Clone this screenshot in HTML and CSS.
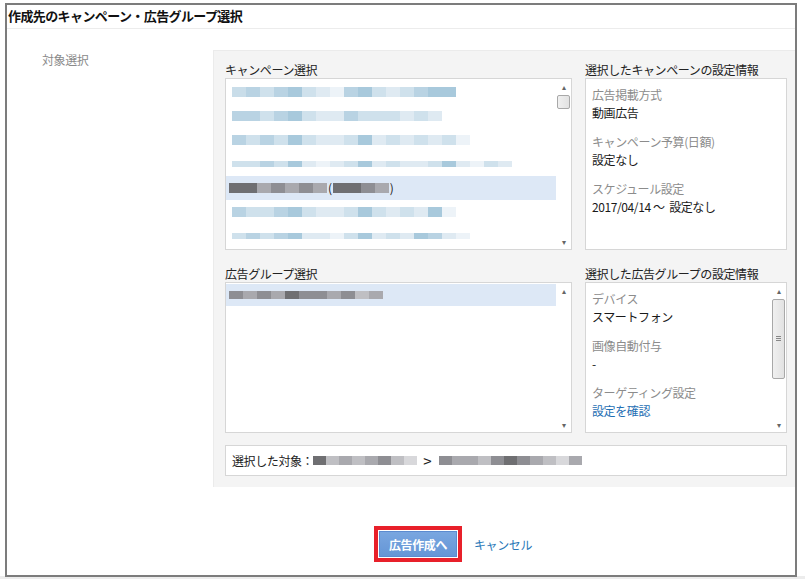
FILE: index.html
```html
<!DOCTYPE html>
<html lang="ja">
<head>
<meta charset="utf-8">
<link rel="stylesheet" href="styles.css">
</head>
<body>
<div class="frame">
  <div class="title">作成先のキャンペーン・広告グループ選択</div>
  <div class="content">
    <div class="side-label">対象選択</div>
    <div class="panel">
      <div class="grid">
        <div class="col">
          <div class="label">キャンペーン選択</div>
          <div class="listbox camp">
            <div class="rows">
              <div class="row"><i class="a"></i><i class="b"></i><i class="c"></i><i class="b"></i><i class="d"></i><i class="c"></i><i class="e"></i><i class="f"></i><i class="b"></i><i class="d"></i><i class="c"></i><i class="e"></i><i class="c"></i><i class="b"></i><i class="d"></i><i class="d"></i></div>
              <div class="row"><i class="b"></i><i class="b"></i><i class="c"></i><i class="b"></i><i class="d"></i><i class="c"></i><i class="e"></i><i class="e"></i><i class="b"></i><i class="c"></i><i class="c"></i><i class="c"></i><i class="e"></i><i class="c"></i><i class="e"></i></div>
              <div class="row"><i class="b"></i><i class="c"></i><i class="b"></i><i class="c"></i><i class="d"></i><i class="c"></i><i class="e"></i><i class="e"></i><i class="c"></i><i class="d"></i><i class="e"></i><i class="c"></i><i class="e"></i><i class="c"></i><i class="e"></i><i class="c"></i><i class="f"></i></div>
              <div class="row thin"><i class="c"></i><i class="c"></i><i class="b"></i><i class="c"></i><i class="d"></i><i class="e"></i><i class="f"></i><i class="e"></i><i class="c"></i><i class="d"></i><i class="e"></i><i class="c"></i><i class="e"></i><i class="e"></i><i class="c"></i><i class="d"></i><i class="e"></i><i class="f"></i><i class="c"></i><i class="e"></i></div>
              <div class="row sel"><i class="g1"></i><i class="g1"></i><i class="g3"></i><i class="g2"></i><i class="g3"></i><i class="g2"></i><i class="g3"></i><span class="paren">(</span><i class="g1"></i><i class="g1"></i><i class="g2"></i><i class="g3"></i><span class="paren">)</span></div>
              <div class="row"><i class="b"></i><i class="c"></i><i class="c"></i><i class="b"></i><i class="d"></i><i class="c"></i><i class="e"></i><i class="e"></i><i class="c"></i><i class="d"></i><i class="c"></i><i class="e"></i><i class="c"></i><i class="e"></i><i class="d"></i><i class="f"></i></div>
              <div class="row thin"><i class="c"></i><i class="b"></i><i class="c"></i><i class="b"></i><i class="d"></i><i class="e"></i><i class="e"></i><i class="f"></i><i class="c"></i><i class="d"></i><i class="e"></i><i class="c"></i><i class="e"></i><i class="d"></i><i class="b"></i><i class="e"></i><i class="f"></i></div>
            </div>
            <div class="sbar">
              <span class="arr">&#9652;</span>
              <span class="thumb small"></span>
              <span class="fill"></span>
              <span class="arr">&#9662;</span>
            </div>
          </div>
        </div>
        <div class="col">
          <div class="label">選択したキャンペーンの設定情報</div>
          <div class="infobox">
            <div class="info">
              <div class="item"><div class="k">広告掲載方式</div><div class="v">動画広告</div></div>
              <div class="item"><div class="k">キャンペーン予算(日額)</div><div class="v">設定なし</div></div>
              <div class="item"><div class="k">スケジュール設定</div><div class="v">2017/04/14 ～&nbsp; 設定なし</div></div>
            </div>
          </div>
        </div>
        <div class="col">
          <div class="label">広告グループ選択</div>
          <div class="listbox grp">
            <div class="rows">
              <div class="row sel"><i class="g2"></i><i class="g3"></i><i class="g2"></i><i class="g3"></i><i class="g1"></i><i class="g2"></i><i class="g2"></i><i class="g3"></i><i class="g2"></i><i class="g4"></i><i class="g3"></i></div>
            </div>
            <div class="sbar">
              <span class="arr">&#9652;</span>
              <span class="fill"></span>
              <span class="arr">&#9662;</span>
            </div>
          </div>
        </div>
        <div class="col">
          <div class="label">選択した広告グループの設定情報</div>
          <div class="infobox grp">
            <div class="info">
              <div class="item"><div class="k">デバイス</div><div class="v">スマートフォン</div></div>
              <div class="item"><div class="k">画像自動付与</div><div class="v">-</div></div>
              <div class="item"><div class="k">ターゲティング設定</div><div class="v link">設定を確認</div></div>
            </div>
            <div class="sbar">
              <span class="arr">&#9652;</span>
              <span class="thumb big"><span class="grip"></span></span>
              <span class="fill"></span>
              <span class="arr">&#9662;</span>
            </div>
          </div>
        </div>
      </div>
      <div class="target">
        <span class="tlabel">選択した対象：</span>
        <span class="blur"><i class="g1"></i><i class="g4"></i><i class="g3"></i><i class="g4"></i><i class="g3"></i><i class="g2"></i><i class="g4"></i><i class="g5"></i></span>
        <span class="gt">&gt;</span>
        <span class="blur"><i class="g2"></i><i class="g3"></i><i class="g3"></i><i class="g4"></i><i class="g2"></i><i class="g1"></i><i class="g2"></i><i class="g3"></i><i class="g4"></i><i class="g5"></i><i class="g3"></i></span>
      </div>
    </div>
  </div>
  <div class="actions">
    <span class="hl"><button class="btn">広告作成へ</button></span>
    <a class="cancel" href="#">キャンセル</a>
  </div>
</div>
</body>
</html>
```

FILE: styles.css
```css
html, body {
  margin: 0;
  padding: 0;
}
body {
  font-family: "Noto Sans CJK JP", "Noto Sans", "Liberation Sans", sans-serif;
  font-size: 12px;
  letter-spacing: -0.4px;
  color: #222;
  height: 579px;
  overflow: hidden;
  background: linear-gradient(#fff 0, #fff 576px, #ececec 576px);
}
.frame {
  box-sizing: border-box;
  margin: 3px 8px 0 5px;
  width: 792px;
  height: 574px;
  border: 2px solid #7c7c7c;
  background: #fff;
  display: flex;
  flex-direction: column;
}
.title {
  height: 23px;
  line-height: 22px;
  padding-left: 1px;
  font-size: 13px;
  font-weight: bold;
  color: #111;
  border-bottom: 1px solid #ececec;
  letter-spacing: -0.6px;
}
.content {
  display: flex;
  margin-top: 21px;
}
.side-label {
  width: 206px;
  box-sizing: border-box;
  padding-left: 35px;
  padding-top: 2px;
  color: #8a8a8a;
  font-size: 12px;
  line-height: 16px;
}
.panel {
  flex: 1;
  background: #f4f4f4;
  border-top: 1px solid #ebebeb;
  border-left: 1px solid #ebebeb;
  padding: 12px 8px 11px 11px;
}
.grid {
  display: grid;
  grid-template-columns: 347px 202px;
  column-gap: 13px;
  row-gap: 17px;
}
.label {
  height: 14px;
  line-height: 14px;
  font-size: 12px;
  color: #222;
  margin-bottom: 1px;
}
.listbox, .infobox {
  box-sizing: border-box;
  border: 1px solid #d6d6d6;
  background: #fff;
  display: flex;
}
.camp, .infobox {
  height: 172px;
}
.grp {
  height: 151px;
}
.rows {
  flex: 1;
  padding-top: 1px;
}
.row {
  height: 24px;
  display: flex;
  align-items: center;
  padding-left: 6px;
}
.row i {
  display: block;
  width: 14px;
  height: 10px;
}
.row.thin i {
  height: 6px;
}
.grp .rows {
  padding-top: 1px;
}
.grp .row {
  height: 22px;
  padding-left: 3px;
}
.grp .row i {
  height: 8px;
}
.row.sel {
  background: #dde8f6;
}
.camp .row.sel {
  padding-left: 3px;
}
.a { background: #c9dde9; }
.b { background: #b9d3e3; }
.c { background: #cfe1ec; }
.d { background: #a8c9dc; }
.e { background: #dfeaf2; }
.f { background: #edf3f8; }
.g1 { background: #6f6f72; }
.g2 { background: #8e8e93; }
.g3 { background: #a9a9ae; }
.g4 { background: #bfbfc3; }
.g5 { background: #d8d8db; }
.paren {
  font-size: 12px;
  color: #222;
  line-height: 10px;
  padding: 0 1px;
}
.sbar {
  width: 15px;
  display: flex;
  flex-direction: column;
  align-items: center;
  padding: 3px 0 2px;
}
.arr {
  font-size: 8px;
  line-height: 10px;
  color: #666;
  height: 10px;
}
.thumb {
  box-sizing: border-box;
  width: 13px;
  border: 1px solid #a8a8a8;
  border-radius: 2px;
  background: linear-gradient(90deg, #f0f0f0, #e2e2e2);
  margin-top: 3px;
}
.thumb.small {
  height: 14px;
}
.thumb.big {
  height: 80px;
  display: flex;
  align-items: center;
  justify-content: center;
}
.grip {
  width: 5px;
  height: 6px;
  background: repeating-linear-gradient(#888 0, #888 1px, transparent 1px, transparent 2px);
}
.fill {
  flex: 1;
}
.info {
  flex: 1;
  padding: 7px 0 0 6px;
}
.item {
  margin-bottom: 11px;
}
.k {
  line-height: 18px;
  color: #8c8c8c;
}
.v {
  line-height: 18px;
  color: #1a1a1a;
}
.link {
  color: #1f6fb4;
}
.target {
  box-sizing: border-box;
  margin-top: 12px;
  height: 31px;
  width: 562px;
  border: 1px solid #d6d6d6;
  background: #fff;
  display: flex;
  align-items: center;
  padding-left: 6px;
}
.tlabel {
  color: #222;
}
.blur {
  display: flex;
}
.blur i {
  display: block;
  width: 13px;
  height: 9px;
}
.gt {
  font-size: 15px;
  margin: 0 8px 0 6px;
  color: #222;
  line-height: 12px;
}
.actions {
  display: flex;
  align-items: center;
  margin-top: 39px;
  padding-left: 367px;
}
.hl {
  display: inline-block;
  border: 4px solid #e8202a;
  padding: 1px;
  background: #fff;
}
.btn {
  display: block;
  width: 78px;
  height: 26px;
  border: 1px solid #5b8bd0;
  background: linear-gradient(#79a6e0, #6596d6);
  color: #fff;
  font-family: "Noto Sans CJK JP", sans-serif;
  font-size: 12px;
  font-weight: bold;
  letter-spacing: -0.4px;
  padding: 0;
}
.cancel {
  margin-left: 12px;
  color: #2a78b8;
  text-decoration: none;
  font-size: 12px;
}
```
